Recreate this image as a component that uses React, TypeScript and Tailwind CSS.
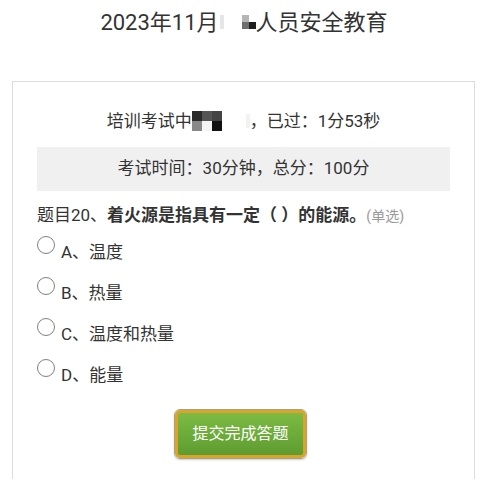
const font = "font-['Roboto','Noto_Sans_CJK_SC',sans-serif]";

const Mosaic: React.FC<{ cells: string[][] }> = ({ cells }) => (
    <span className="inline-flex flex-col align-middle">
        {cells.map((row, i) => (
            <span key={i} className="flex">
                {row.map((c, j) => (
                    <span key={j} className={`block w-[10px] h-[10px] ${c}`}></span>
                ))}
            </span>
        ))}
    </span>
);

const options = ["A、温度", "B、热量", "C、温度和热量", "D、能量"];

export default function App() {
    return (
        <div className={`${font} w-[488px] h-[479px] overflow-hidden bg-white text-[#333]`}>
            <div className="h-[44px] flex items-center justify-center text-[22px]">
                <span>2023年11月</span>
                <span className="inline-block w-[4px] h-[14px] bg-[#e6e6e6] ml-[1px]"></span>
                <span className="inline-block w-[18px]"></span>
                <span className="inline-flex flex-col">
                    <span className="flex">
                        <span className="block w-[7px] h-[7px] bg-[#b5b5b5]"></span>
                        <span className="block w-[7px] h-[7px] bg-white"></span>
                    </span>
                    <span className="flex">
                        <span className="block w-[7px] h-[7px] bg-[#6e6e6e]"></span>
                        <span className="block w-[7px] h-[7px] bg-[#1f1f1f]"></span>
                    </span>
                </span>
                <span>人员安全教育</span>
            </div>

            <div className="mt-[37px] ml-[12px] w-[463px] h-[420px] border border-[#dcdcdc] px-6">
                <div className="pt-[27px] h-[51px] leading-[24px] text-[17px] flex justify-center items-center">
                    <span>培训考试中</span>
                    <Mosaic cells={[["bg-[#2a2a2a]", "bg-[#555]", "bg-[#444]"], ["bg-[#888]", "bg-[#f4f4f4]", "bg-[#111]"]]} />
                    <span className="inline-block w-[24px]"></span>
                    <span className="inline-block w-[4px] h-[14px] bg-[#f2f2f2]"></span>
                    <span>，已过：1分53秒</span>
                </div>
                <div className="mt-[14px] h-[44px] bg-[#f0f0f0] flex items-center justify-center text-[17px]">
                    考试时间：30分钟，总分：100分
                </div>
                <div className="mt-[12px] leading-[24px] text-[17px] whitespace-nowrap">
                    <span>题目20、</span>
                    <span className="font-bold">着火源是指具有一定（ ）的能源。</span>
                    <span className="text-[14px] text-[#999]">(单选)</span>
                </div>
                <div className="mt-[8px] flex flex-col gap-[14px]">
                    {options.map((o) => (
                        <label key={o} className="flex items-start h-[27px]">
                            <span className="block w-[18px] h-[18px] rounded-full border border-[#808080] bg-white"></span>
                            <span className="ml-[6px] mt-[4px] leading-[24px] text-[17px]">{o}</span>
                        </label>
                    ))}
                </div>
                <div className="mt-[23px] flex justify-center pr-[6px]">
                    <div className="rounded-[6px] border border-[#a8a384] shadow-[0_1px_2px_rgba(0,0,0,0.2)]">
                        <button className="h-[48px] w-[131px] rounded-[5px] border-[3px] border-[#d9a42a] bg-gradient-to-b from-[#7dbb44] to-[#5e9c31] text-white text-[16px] flex items-center justify-center">
                            提交完成答题
                        </button>
                    </div>
                </div>
            </div>
        </div>
    );
}
